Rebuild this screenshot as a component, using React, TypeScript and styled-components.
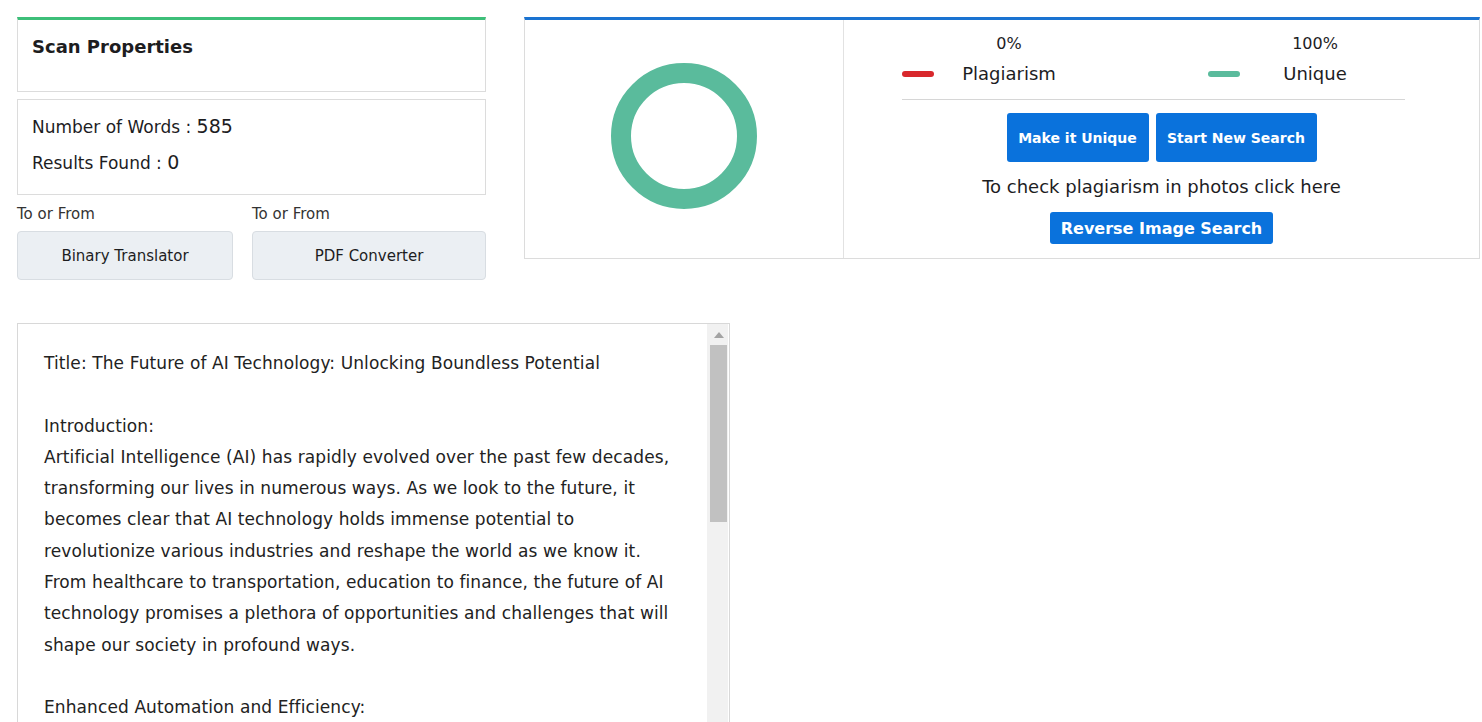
import React from 'react'
import styled, { createGlobalStyle } from 'styled-components'

const GlobalStyle = createGlobalStyle`
  body {
    margin: 0;
    background: #fff;
    font-family: "DejaVu Sans", "Open Sans", sans-serif;
    color: #1d1d1f;
  }
`

const Page = styled.div`
  padding: 17px 0 0 17px;
`

const TopRow = styled.div`
  display: flex;
  align-items: flex-start;
  gap: 38px;
`

const LeftColumn = styled.div`
  width: 469px;
  display: flex;
  flex-direction: column;
`

const Card = styled.div<{ $accent?: string; $height: number }>`
  box-sizing: border-box;
  height: ${p => p.$height}px;
  border: 1px solid #dcdcdc;
  border-top: ${p => (p.$accent ? `3px solid ${p.$accent}` : '1px solid #dcdcdc')};
  padding: 0 14px;
  margin-bottom: 7px;
`

const CardTitle = styled.h5`
  margin: 14px 0 0;
  font-size: 18px;
  font-weight: 600;
  line-height: 26px;
`

const InfoLine = styled.div`
  font-size: 17px;
  line-height: 24px;
  & + & {
    margin-top: 11px;
  }
  &:first-child {
    margin-top: 14px;
  }
  b {
    font-size: 19px;
    font-weight: 400;
  }
`

const ToolsRow = styled.div`
  display: flex;
  gap: 19px;
`

const Tool = styled.div<{ $width: number }>`
  width: ${p => p.$width}px;
  display: flex;
  flex-direction: column;
`

const ToolLabel = styled.span`
  font-size: 15px;
  line-height: 20px;
  margin-top: 2px;
  color: #333;
`

const ToolButton = styled.button`
  margin-top: 7px;
  height: 49px;
  border: 1px solid #d8dde2;
  border-radius: 4px;
  background: #ebeff3;
  font-family: inherit;
  font-size: 15px;
  color: #1d1d1f;
`

const ResultPanel = styled.div`
  box-sizing: border-box;
  width: 956px;
  height: 242px;
  border: 1px solid #dcdcdc;
  border-top: 3px solid #1a73d1;
  display: flex;
`

const ChartCell = styled.div`
  width: 318px;
  border-right: 1px solid #e2e2e2;
  display: flex;
  align-items: center;
  justify-content: center;
  padding-bottom: 6px;
`

const SummaryCell = styled.div`
  flex: 1;
  display: flex;
  flex-direction: column;
  align-items: center;
`

const StatsRow = styled.div`
  align-self: stretch;
  display: flex;
  gap: 151px;
  padding-left: 58px;
`

const Stat = styled.div`
  display: flex;
  align-items: flex-end;
  gap: 27px;
`

const StatBar = styled.span<{ $color: string }>`
  width: 32px;
  height: 6px;
  border-radius: 3px;
  background: ${p => p.$color};
  margin-bottom: 11px;
`

const StatText = styled.div`
  width: 96px;
  display: flex;
  flex-direction: column;
  align-items: center;
`

const Percent = styled.span`
  font-size: 16px;
  line-height: 24px;
  margin-top: 12px;
`

const StatLabel = styled.span`
  font-size: 18px;
  line-height: 28px;
  margin-top: 4px;
`

const Divider = styled.hr`
  width: 503px;
  margin: 11px 0 13px -16px;
  border: 0;
  border-top: 1px solid #d6d6d6;
`

const Actions = styled.div`
  display: flex;
  gap: 7px;
`

const BlueButton = styled.button<{ $height: number; $size: number; $width: number }>`
  width: ${p => p.$width}px;
  height: ${p => p.$height}px;
  padding: 0;
  border: 0;
  border-radius: 3px;
  background: #0a72dc;
  color: #fff;
  font-family: inherit;
  font-weight: 700;
  font-size: ${p => p.$size}px;
  white-space: nowrap;
`

const PhotoHint = styled.p`
  margin: 13px 0 13px;
  font-size: 18px;
  line-height: 24px;
`

const TextFrame = styled.div`
  box-sizing: border-box;
  margin-top: 43px;
  width: 713px;
  height: 420px;
  border: 1px solid #d8d8d8;
  display: flex;
`

const TextBox = styled.textarea`
  flex: 1;
  padding: 24px 20px 0 26px;
  border: 0;
  resize: none;
  outline: none;
  overflow: hidden;
  font-family: "DejaVu Sans", "Open Sans", sans-serif;
  font-size: 17px;
  letter-spacing: 0.1px;
  line-height: 31.3px;
  color: #222;
`

const ScrollTrack = styled.div`
  width: 21px;
  margin-right: 1px;
  background: #f1f1f1;
  display: flex;
  flex-direction: column;
  align-items: flex-end;
`

const ScrollArrow = styled.div`
  align-self: center;
  margin: 8px 0 7px 2px;
  width: 0;
  height: 0;
  border-left: 5px solid transparent;
  border-right: 5px solid transparent;
  border-bottom: 6px solid #a3a3a3;
`

const ScrollThumb = styled.div<{ $size: number }>`
  width: 17px;
  height: ${p => p.$size}px;
  margin-right: 1px;
  background: #c1c1c1;
`

const essay = `Title: The Future of AI Technology: Unlocking Boundless Potential

Introduction:
Artificial Intelligence (AI) has rapidly evolved over the past few decades, transforming our lives in numerous ways. As we look to the future, it becomes clear that AI technology holds immense potential to revolutionize various industries and reshape the world as we know it. From healthcare to transportation, education to finance, the future of AI technology promises a plethora of opportunities and challenges that will shape our society in profound ways.

Enhanced Automation and Efficiency:
One of the most significant impacts of AI technology in the future will be the enhanced automation of tasks across industries. Machine learning algorithms and robotics will streamline repetitive processes, allowing humans to focus on creative and strategic work that demands critical thinking.

Healthcare Revolution:
AI is poised to transform healthcare through faster diagnosis, personalized treatment plans and accelerated drug discovery, improving outcomes for patients around the world.`

const Donut = () => (
  <svg width="146" height="146" viewBox="0 0 146 146">
    <circle cx="73" cy="73" r="63" fill="none" stroke="#5abb9c" strokeWidth="20" />
  </svg>
)

const App = () => {
  return (
    <Page>
      <GlobalStyle />
      <TopRow>
        <LeftColumn>
          <Card $accent="#3dbf79" $height={75}>
            <CardTitle>Scan Properties</CardTitle>
          </Card>
          <Card $height={96}>
            <InfoLine>Number of Words : <b>585</b></InfoLine>
            <InfoLine>Results Found : <b>0</b></InfoLine>
          </Card>
          <ToolsRow>
            <Tool $width={216}>
              <ToolLabel>To or From</ToolLabel>
              <ToolButton>Binary Translator</ToolButton>
            </Tool>
            <Tool $width={234}>
              <ToolLabel>To or From</ToolLabel>
              <ToolButton>PDF Converter</ToolButton>
            </Tool>
          </ToolsRow>
        </LeftColumn>
        <ResultPanel>
          <ChartCell>
            <Donut />
          </ChartCell>
          <SummaryCell>
            <StatsRow>
              <Stat>
                <StatBar $color="#d8282c" />
                <StatText>
                  <Percent>0%</Percent>
                  <StatLabel>Plagiarism</StatLabel>
                </StatText>
              </Stat>
              <Stat>
                <StatBar $color="#5abb9c" />
                <StatText>
                  <Percent>100%</Percent>
                  <StatLabel>Unique</StatLabel>
                </StatText>
              </Stat>
            </StatsRow>
            <Divider />
            <Actions>
              <BlueButton $height={49} $size={14} $width={142}>Make it Unique</BlueButton>
              <BlueButton $height={49} $size={14} $width={161}>Start New Search</BlueButton>
            </Actions>
            <PhotoHint>To check plagiarism in photos click here</PhotoHint>
            <BlueButton $height={32} $size={16} $width={223}>Reverse Image Search</BlueButton>
          </SummaryCell>
        </ResultPanel>
      </TopRow>
      <TextFrame>
        <TextBox readOnly value={essay} />
        <ScrollTrack>
          <ScrollArrow />
          <ScrollThumb $size={177} />
        </ScrollTrack>
      </TextFrame>
    </Page>
  )
}

export default App
